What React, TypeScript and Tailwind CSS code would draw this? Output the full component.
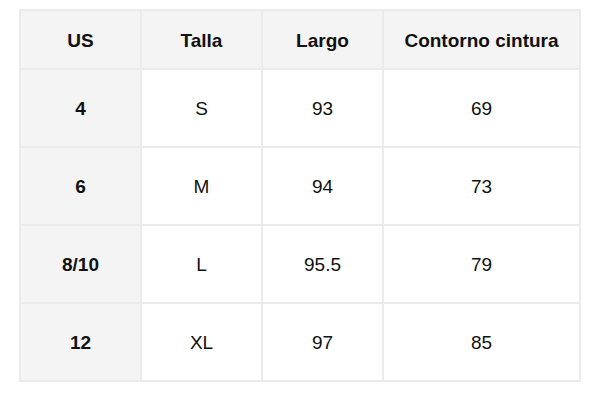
const rows = [
  ["4", "S", "93", "69"],
  ["6", "M", "94", "73"],
  ["8/10", "L", "95.5", "79"],
  ["12", "XL", "97", "85"],
];

const headers = ["US", "Talla", "Largo", "Contorno cintura"];

export default function App() {
  return (
    <div className="w-[600px] h-[400px] bg-white pt-[9px] pl-[19px] font-['Liberation_Sans',Arial,sans-serif] text-[19px] text-[#111]">
      <table className="w-[562px] border-collapse table-fixed">
        <colgroup>
          <col className="w-[121px]" />
          <col className="w-[121px]" />
          <col className="w-[121px]" />
          <col />
        </colgroup>
        <thead>
          <tr className="h-[59px] bg-[#f4f4f4]">
            {headers.map(h => (
              <th key={h} className="border-2 border-[#ebebeb] text-center font-bold pt-[3px]">
                {h}
              </th>
            ))}
          </tr>
        </thead>
        <tbody>
          {rows.map(r => (
            <tr key={r[0]} className="h-[78px]">
              {r.map((c, i) => (
                <td
                  key={i}
                  className={
                    "border-2 border-[#ebebeb] text-center pt-[3px] " +
                    (i === 0 ? "bg-[#f4f4f4] font-bold" : "bg-white")
                  }
                >
                  {c}
                </td>
              ))}
            </tr>
          ))}
        </tbody>
      </table>
    </div>
  );
}
